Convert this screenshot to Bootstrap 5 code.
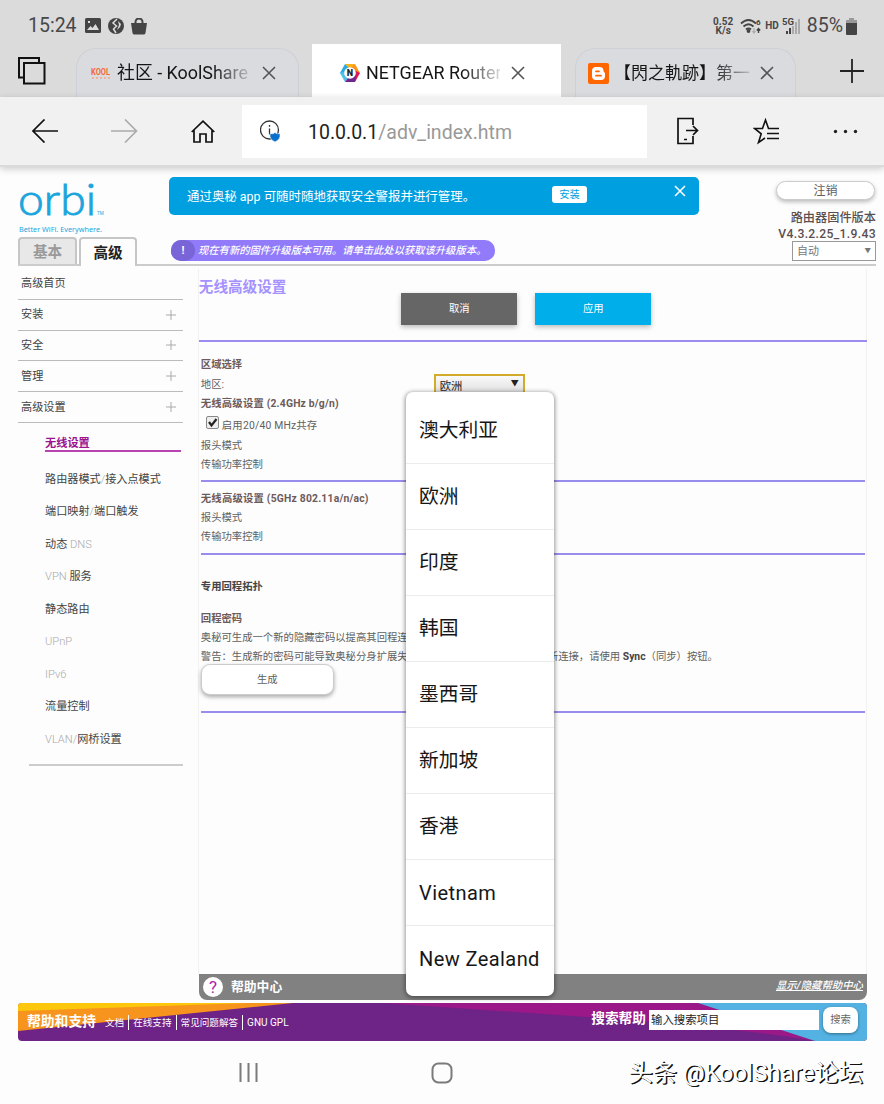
<!DOCTYPE html>
<html lang="zh-CN">
<head>
<meta charset="utf-8">
<meta name="viewport" content="width=device-width, initial-scale=1">
<title>NETGEAR Router</title>
<link rel="stylesheet" href="https://cdn.jsdelivr.net/npm/bootstrap@5.3.0/dist/css/bootstrap.min.css">
<style>
body{font-family:Roboto,"Noto Sans CJK SC",sans-serif;font-size:10.35px;line-height:1;color:#606060;background:#fdfdfd;width:884px;height:1104px;overflow:hidden;white-space:nowrap}
svg{display:block;flex:none}
.status{height:48px;background:#dbdbdb;padding:4px 27px 0 28px;color:#484848}
.clock{font-size:19.5px}
.tabs{height:49px;background:#dbdbdb}
.btab{height:49px;font-size:17.9px;color:#151515;position:relative}
.btab.idle{background:#dadbdf;border:1px solid #cdd0d6;border-bottom:0;border-radius:20px 20px 0 0;height:49px}
.btab.live{background:#fff;height:53px;margin-top:-4px;padding-top:4px}
.tname{overflow:hidden;-webkit-mask-image:linear-gradient(90deg,#000 72%,transparent 105%);mask-image:linear-gradient(90deg,#000 72%,transparent 105%);line-height:28px}
.tools{height:70px;background:#f1f1f1;border-bottom:2px solid #dadada;box-shadow:0 2px 7px #0003;position:relative}
.addr{width:405px;height:53px;background:#fff;font-size:19.5px;color:#999;margin-left:27px}
.addr b{font-weight:400;color:#222}
.page{padding:0 17px 0 18px}
.phead{height:99px;border-bottom:2px solid #ccc;margin-right:-9px}
.hleft{width:151px}
.ptab{height:27px;border:2px solid #c6c6c6;border-bottom:0;border-radius:4px 4px 0 0;font-size:14.6px;font-weight:700;padding-top:1px}
.ptab.one{width:59px;background:#e8e8e8;color:#999}
.ptab.two{width:58px;background:#fdfdfd;color:#222;margin-left:2px;height:29px;margin-bottom:-2px}
.appbar{width:530px;height:38px;background:#009fe0;border-radius:5px;color:#fff;font-size:12.45px;margin-top:10px}
.appbar .go{background:#fff;color:#009fe0;border-radius:3px;width:35px;height:17px;font-size:10.3px;padding-top:1px}
.fw{width:324px;height:21px;background:#917bfa;border-radius:10px;color:#fff;font-size:10.3px;font-weight:500;font-style:italic;margin:25px 0 0 2px}
.fw span{padding-top:2px}
.fw i{width:24px;height:21px;background:#7964d8;border-radius:10px;font-style:normal;font-weight:700;font-size:11px;margin-right:3px}
.out{width:99px;height:19px;border-radius:10px;border:1px solid #ccc;background:#fff;box-shadow:0 2px 4px #0004;font-size:12px;margin:14px 1px 0 0;padding-top:1px}
.ver{font-size:12.2px;line-height:15.5px;font-weight:500;color:#5b4f4f}
.auto{width:84px;height:20px;border:1px solid #999;font-size:11px;color:#777;background:#fff;padding:1px 4px 0}
.side{width:165px;padding-top:3px;color:#444;font-size:11.15px}
.side .top{height:30.8px;border-bottom:1px solid #bbb;padding:0 6px 0 3px}
.side .sub{height:32.5px;margin-left:27px}
.side .sub span{color:#aaa;font-weight:300}
.cur{height:20px;margin:9px 2px 11px 27px;border-bottom:2px solid #b844b0;color:#9c128f;font-weight:700;font-size:11.2px;padding-top:6px}
.main-pane{width:670px;margin-left:15px;border-left:1px solid #f2f2f2;border-right:1px solid #f2f2f2;margin-top:3px}
.ttl{height:73px;border-bottom:2px solid #9a8cf0;margin-right:-1px}
.ttl h1{font-size:14.6px;font-weight:700;color:#a592ff;width:202.5px;margin:10px 0 0}
.cmd{width:116px;height:32px;color:#fff;font-size:10.3px;margin:23.500px 18px 0 0;box-shadow:0 2px 5px #0004;padding-top:2px}
.form-rows{padding:14px 1px 0 2px}
.ln{height:19.15px}
.hd{font-weight:700;color:#6d5a5a}
.rule{height:2px;background:#988cec}
.gen{width:133px;height:31px;border:1px solid #ccc;border-radius:9px;background:#fff;box-shadow:0 2px 4px #0005;margin-top:-1.5px;padding-top:1px}
.sel{width:91px;height:22px;margin-top:1px;border:2px solid #d2ab2a;background:linear-gradient(#fafafa,#ddd);color:#222;font-size:11.3px;padding:3px 4px 0 4px}
.help{height:26px;background:#818181;color:#fff;border-radius:0 0 8px 8px;margin:0 0 0 181px;width:668px;padding:0 4px 0 3px}
.foot{width:849px;height:38px;margin-top:3px;border-radius:4px;overflow:hidden;position:relative;color:#fff}
.foot .bg-art{position:absolute;inset:0}
.foot .fg{position:relative;height:38px}
.links span+span{border-left:1px solid #fff;padding-left:4px;margin-left:4px}
.popup{position:absolute;left:406px;top:392px;width:148px;height:604px;background:#fff;border-radius:7px;box-shadow:0 1px 4px 1px #0006;padding:6px 0 0;font-size:19.8px;color:#161616}
.popup div{height:66px;border-bottom:1px solid #ececec;padding:1px 0 0 13px}
.popup div:last-child{border:0}
.popup .lat{font-size:20px;letter-spacing:.42px;padding-top:0}
.popup .lat:last-child{height:65px}
.andr{height:63px;position:relative}
.wm{font-size:24.2px;color:#fff;text-shadow:1px 1px 0 #111,1.500px 1px 0 #222}
</style>
</head>
<body>
<div class="status d-flex align-items-center">
  <span class="clock">15:24</span>
  <svg class="ms-2" width="16" height="16" viewBox="0 0 16 16"><rect width="16" height="15" rx="1.5" fill="#444"/><path d="M2 12 5.500 8l2 2 3-4 3.500 6zM3 3h2v2H3z" fill="#dbdbdb"/></svg>
  <svg style="margin-left:7px" width="16" height="16" viewBox="0 0 16 16"><circle cx="8" cy="8" r="8" fill="#444"/><path d="M9 1 5 5l3.500 3-3 3 2.500 4" fill="none" stroke="#dbdbdb" stroke-width="1.500"/><path d="m10 3 1 4-2 5 3-3 1-3z" fill="#dbdbdb"/></svg>
  <svg style="margin-left:7px" width="16" height="17" viewBox="0 0 16 17"><path d="M0 5h16l-1.500 10a2 2 0 0 1-2 1.500h-9a2 2 0 0 1-2-1.500z" fill="#444"/><path d="M4.500 7V4a3.500 3.500 0 0 1 7 0v3" fill="none" stroke="#444" stroke-width="2"/></svg>
  <div class="ms-auto d-flex align-items-center">
    <div class="text-center fw-bold" style="font-size:10px;line-height:9.5px">0.52<br>K/s</div>
    <svg style="margin-left:7px" width="22" height="17" viewBox="0 0 22 17" fill="none" stroke="#444" stroke-width="1.800"><path d="M1 5.500Q8.500-1.500 16 5.500M3.500 8.500q5-4.500 10 0M6 11.500q2.500-2.200 5 0"/><circle cx="8.500" cy="13" r="1" fill="#444"/><path d="M14 10v4M12.500 13l1.500 2 1.500-2" stroke="#aaa" stroke-width="1.200"/><path d="M18.500 15v-4M16.800 12.500l1.700-2 1.700 2" stroke-width="1.400"/><text x="16" y="7" font-size="8" font-weight="700" fill="#444" stroke="none">6</text></svg>
    <span class="fw-bold" style="font-size:10px;margin-left:3px">HD</span>
    <svg style="margin-left:3px" width="19" height="18" viewBox="0 0 19 18"><text x="0" y="8" font-size="9.500" font-weight="700" fill="#444">5G</text><path d="M5 17v-3M8 17v-6" stroke="#444" stroke-width="2"/><path d="M11 17V9M14 17V5M17 17V2" stroke="#aaa" stroke-width="2"/></svg>
    <span class="clock" style="margin-left:6px">85%</span>
    <svg style="margin-left:3px" width="11" height="17" viewBox="0 0 11 17"><path d="M3 0h5v3H3z" fill="#999"/><rect y="2" width="11" height="15" rx="1" fill="#444"/><path d="M0 2h11v3H0z" fill="#999"/></svg>
  </div>
</div>

<div class="tabs d-flex">
  <svg style="margin:9px 30px 0 18px" width="28" height="28" viewBox="0 0 28 28" fill="none" stroke="#111" stroke-width="2"><path d="M5 20.500H1V1h20v4"/><rect x="6" y="6" width="20.500" height="20.500"/></svg>
  <div class="btab idle d-flex align-items-center" style="width:223px;padding-left:14px">
    <svg width="20" height="13" viewBox="0 0 20 13"><text x="0" y="8" font-size="8.500" font-weight="700" textLength="19" lengthAdjust="spacingAndGlyphs" fill="#f36a35">KOOL</text><path d="M1 11h18" stroke="#f6a183" stroke-width="1.500" stroke-dasharray="2 2"/></svg>
    <span class="tname" style="width:132px;margin-left:6px">社区 - KoolShare</span>
    <svg style="margin-left:13px" width="14" height="14" viewBox="0 0 14 14" stroke="#555" stroke-width="1.600"><path d="m1 1 12 12M13 1 1 13"/></svg>
  </div>
  <div class="btab live d-flex align-items-center" style="width:249px;margin-left:13px;padding-left:28px">
    <svg width="20" height="20" viewBox="0 0 20 20"><path d="M5 1h10L10 7z" fill="#fbb216"/><path d="M5 1 0 10l6 3 4-7z" fill="#29aae1"/><path d="m0 10 5 9 5-6-3-5z" fill="#54c0e8"/><path d="m15 1 5 9-6 4-5-8z" fill="#f7931e"/><path d="m20 10-5 9-5-6 4-6z" fill="#d8195a"/><path d="M15 19H5l6-8 5 2z" fill="#70268c"/><circle cx="10" cy="10" r="5.800" fill="#fff"/><text x="6.800" y="13.200" font-size="9" font-weight="900" fill="#222">N</text></svg>
    <span class="tname" style="width:134px;margin-left:6px">NETGEAR Router</span>
    <svg style="margin-left:11px" width="14" height="14" viewBox="0 0 14 14" stroke="#555" stroke-width="1.600"><path d="m1 1 12 12M13 1 1 13"/></svg>
  </div>
  <div class="btab idle d-flex align-items-center" style="width:221px;margin-left:14px;padding-left:12px">
    <svg width="21" height="21" viewBox="0 0 21 21"><rect width="21" height="21" rx="2" fill="#f60"/><path d="M8 4h3.500a4 4 0 0 1 4 4c0 1.500 1.500 1 1.500 2.500V13a4 4 0 0 1-4 4H8a4 4 0 0 1-4-4V8a4 4 0 0 1 4-4z" fill="#fff"/><path d="M8 8.300h3M8 12.700h5" stroke="#f60" stroke-width="1.800" stroke-linecap="round"/></svg>
    <span class="tname" style="width:136px;margin-left:5px;font-size:17px;font-family:Roboto,'Noto Sans CJK TC',sans-serif">【閃之軌跡】第一</span>
    <svg style="margin-left:10px" width="14" height="14" viewBox="0 0 14 14" stroke="#555" stroke-width="1.600"><path d="m1 1 12 12M13 1 1 13"/></svg>
  </div>
  <svg style="margin:11px 0 0 44px" width="24" height="24" viewBox="0 0 24 24" stroke="#222" stroke-width="1.800"><path d="M12 0v24M0 12h24"/></svg>
</div>

<div class="tools d-flex align-items-center">
  <svg style="margin-left:32px" width="27" height="24" viewBox="0 0 27 24" fill="none" stroke="#111" stroke-width="1.700"><path d="M26 12H1M12.500.500 1 12l11.500 11.500"/></svg>
  <svg style="margin-left:52px" width="27" height="24" viewBox="0 0 27 24" fill="none" stroke="#aaa" stroke-width="1.600"><path d="M0 12h25M14 .500 25.500 12 14 23.500"/></svg>
  <svg style="margin-left:53px" width="24" height="23" viewBox="0 0 24 23" fill="none" stroke="#111" stroke-width="1.700"><path d="M.700 12 12 1.200 23.300 12M3 10v12h6v-8h6v8h6V10"/></svg>
  <div class="addr d-flex align-items-center">
    <svg style="margin:0 27px 0 18px" width="21" height="22" viewBox="0 0 21 22"><circle cx="9.500" cy="10" r="9" fill="none" stroke="#333" stroke-width="1.300"/><path d="M9.500 8.500v6M9.500 5v1.700" stroke="#333" stroke-width="1.300"/><path d="M10 13.500q3 1 5-1 2 2 5 1v3q0 3-5 5.500-5-2.500-5-5.500z" fill="#0b6fcc" stroke="#fff" stroke-width=".600"/></svg>
    <span style="padding-top:3px"><b>10.0.0.1</b>/adv_index.htm</span>
  </div>
  <svg style="margin-left:29px" width="23" height="28" viewBox="0 0 23 28" fill="none" stroke="#111" stroke-width="1.700"><path d="M17 8V1.500H2v25h15V19M10 13.500h11M17 9l4.500 4.500L17 18M8 22.500h3"/></svg>
  <svg style="margin-left:54px" width="27" height="27" viewBox="0 0 27 27" fill="none" stroke="#111" stroke-width="1.600"><path d="M26 10.500H15.500L12.500 2 9.500 10.500H1.500L8.200 15.800 5.500 24.500 12 20M14 15.500h12M14 20.500h12"/></svg>
  <svg style="margin-left:53px" width="25" height="5" viewBox="0 0 25 5" fill="#222"><circle cx="2.500" cy="2.500" r="1.700"/><circle cx="12.500" cy="2.500" r="1.700"/><circle cx="22.500" cy="2.500" r="1.700"/></svg>
</div>

<div class="page">
  <header class="phead d-flex">
    <div class="hleft d-flex flex-column">
      <svg width="100" height="70" viewBox="0 0 100 70" fill="#1ba5dd"><text x="0" y="48" style="font-family:Lato,sans-serif;font-weight:300" stroke="#1ba5dd" stroke-width=".9" font-size="43" textLength="78" lengthAdjust="spacingAndGlyphs">orbi</text><text x="79" y="48" font-size="4.500">TM</text><text x="1" y="65" font-family="Noto Sans" font-size="7.500" textLength="83" lengthAdjust="spacingAndGlyphs">Better WiFi. Everywhere.</text></svg>
      <div class="d-flex mt-auto"><div class="ptab one d-flex align-items-center justify-content-center">基本</div><div class="ptab two d-flex align-items-center justify-content-center">高级</div></div>
    </div>
    <div>
      <div class="appbar d-flex align-items-center"><span style="width:383px;padding:3px 0 0 18px">通过奥秘 app 可随时随地获取安全警报并进行管理。</span><span class="go d-flex align-items-center justify-content-center" style="margin-top:-3px">安装</span><svg style="margin:-10px 0 0 87px" width="12" height="12" viewBox="0 0 12 12" stroke="#fff" stroke-width="1.600"><path d="m1 1 10 10M11 1 1 11"/></svg></div>
      <div class="fw d-flex align-items-center"><i class="d-flex align-items-center justify-content-center">!</i><span>现在有新的固件升级版本可用。请单击此处以获取该升级版本。</span></div>
    </div>
    <div class="ms-auto d-flex flex-column align-items-end">
      <div class="out d-flex align-items-center justify-content-center">注销</div>
      <div class="ver text-end" style="margin-top:11px">路由器固件版本<br><span style="letter-spacing:.32px">V4.3.2.25_1.9.43</span></div>
      <div class="auto d-flex align-items-center justify-content-between" style="margin-top:-1px">自动<span style="font-size:6.5px">▼</span></div>
    </div>
  </header>

  <div class="d-flex" style="height:708px">
    <nav class="side">
      <div class="top d-flex align-items-center">高级首页</div>
      <div class="top d-flex align-items-center justify-content-between">安装<svg width="12" height="12" stroke="#aaa"><path d="M6 1v10M1 6h10"/></svg></div>
      <div class="top d-flex align-items-center justify-content-between">安全<svg width="12" height="12" stroke="#aaa"><path d="M6 1v10M1 6h10"/></svg></div>
      <div class="top d-flex align-items-center justify-content-between">管理<svg width="12" height="12" stroke="#aaa"><path d="M6 1v10M1 6h10"/></svg></div>
      <div class="top d-flex align-items-center justify-content-between">高级设置<svg width="12" height="12" stroke="#aaa"><path d="M6 1v10M1 6h10"/></svg></div>
      <div class="cur d-flex align-items-center">无线设置</div>
      <div class="sub d-flex align-items-center">路由器模式<span>/</span>接入点模式</div>
      <div class="sub d-flex align-items-center">端口映射<span>/</span>端口触发</div>
      <div class="sub d-flex align-items-center">动态&nbsp;<span>DNS</span></div>
      <div class="sub d-flex align-items-center"><span>VPN</span>&nbsp;服务</div>
      <div class="sub d-flex align-items-center">静态路由</div>
      <div class="sub d-flex align-items-center"><span>UPnP</span></div>
      <div class="sub d-flex align-items-center"><span>IPv6</span></div>
      <div class="sub d-flex align-items-center">流量控制</div>
      <div class="sub d-flex align-items-center"><span>VLAN/</span>网桥设置</div>
      <div style="height:11px;margin-left:11px;border-bottom:2px solid #ccc"></div>
    </nav>
    <main class="main-pane" style="height:705px">
      <div class="ttl d-flex align-items-start">
        <h1>无线高级设置</h1>
        <div class="cmd d-flex align-items-center justify-content-center" style="background:#666">取消</div>
        <div class="cmd d-flex align-items-center justify-content-center" style="background:#00aeea">应用</div>
      </div>
      <div class="form-rows">
        <div class="ln hd d-flex align-items-center">区域选择</div>
        <div class="ln d-flex align-items-center"><span style="width:233px">地区:</span><span class="sel d-flex justify-content-between align-items-center">欧洲<span style="font-size:8px;margin-top:-6px">▼</span></span></div>
        <div class="ln hd d-flex align-items-center" style="letter-spacing:.18px">无线高级设置 (2.4GHz b/g/n)</div>
        <div class="ln d-flex align-items-center" style="height:23px;padding:3px 0 0 5px"><svg style="margin:-7px 3px 0 0" width="13" height="13" viewBox="0 0 13 13"><rect x=".5" y=".5" width="12" height="12" rx="1.500" fill="#eee" stroke="#888"/><path d="m3 6 2.500 3.500L10.500 3" fill="none" stroke="#222" stroke-width="2.200"/></svg><span style="letter-spacing:.2px">启用20/40 MHz共存</span></div>
        <div class="ln d-flex align-items-center">报头模式</div>
        <div class="ln d-flex align-items-center">传输功率控制</div>
        <div class="rule" style="margin:5.5px 0 7px"></div>
        <div class="ln hd d-flex align-items-center" style="letter-spacing:.2px">无线高级设置 (5GHz 802.11a/n/ac)</div>
        <div class="ln d-flex align-items-center">报头模式</div>
        <div class="ln d-flex align-items-center">传输功率控制</div>
        <div class="rule" style="margin:6px 0 22.5px"></div>
        <div class="ln hd d-flex align-items-center" style="color:#444">专用回程拓扑</div>
        <div class="ln hd d-flex align-items-center" style="margin-top:13.8px">回程密码</div>
        <div class="ln d-flex align-items-center" style="height:18.4px">奥秘可生成一个新的隐藏密码以提高其回程连</div>
        <div class="ln d-flex align-items-center" style="height:18.4px"><span style="width:347px">警告：生成新的密码可能导致奥秘分身扩展失</span><span>新连接，请使用 <b style="color:#444">Sync</b>（同步）按钮。</span></div>
        <div class="gen d-flex align-items-center justify-content-center">生成</div>
        <div class="rule" style="margin-top:16px"></div>
      </div>
    </main>
  </div>
  <div class="help d-flex align-items-center"><svg width="22" height="22" viewBox="0 0 22 22"><circle cx="11" cy="11" r="10" fill="#fff"/><text x="11" y="17" text-anchor="middle" font-size="17" fill="#b01fa8">?</text></svg><span class="fw-bold" style="font-size:12.8px;margin-left:7px">帮助中心</span><span class="ms-auto fst-italic text-decoration-underline" style="font-size:10.4px;font-weight:500;margin-top:-2px">显示/隐藏帮助中心</span></div>
  <footer class="foot">
    <svg class="bg-art" width="849" height="38" viewBox="0 0 849 38"><path fill="#6e2386" d="M0 0h849v38H0z"/><path fill="#f7941e" d="M0 0h275L0 28z"/><path fill="#fdc70c" d="M0 0h230L0 8z"/><path fill="#9b1889" d="M365 0h320l112 38Q700 22 540 12z"/><path fill="#53b2e2" d="M680 0h169v38H797z"/></svg>
    <div class="fg d-flex align-items-center"><b style="font-size:13.8px;margin-left:9px">帮助和支持</b>
      <div class="links d-flex align-items-center" style="font-size:9.6px;margin:1px 0 0 9px;line-height:15px"><span>文档</span><span>在线支持</span><span>常见问题解答</span><span style="font-size:10px">GNU GPL</span></div>
      <b class="ms-auto" style="font-size:13.7px;margin-top:-6px">搜索帮助</b>
      <span class="bg-white d-flex align-items-center" style="width:170px;height:20px;color:#222;font-size:11.4px;margin:-5px 4px 0 3px;padding:2px 0 0 2px">输入搜索项目</span>
      <span class="bg-white d-flex align-items-center justify-content-center" style="width:35px;height:26px;border-radius:8px;color:#666;margin:-4px 9px 0 0;box-shadow:0 1px 3px #0006">搜索</span>
    </div>
  </footer>
</div>

<div class="andr d-flex align-items-center">
  <svg style="margin-left:239px" width="20" height="19" stroke="#7b7b7b" stroke-width="2"><path d="M1.500 0v19M9.500 0v19M17.500 0v19"/></svg>
  <svg style="margin-left:172px" width="22" height="22"><rect x="1.500" y="1.500" width="19" height="19" rx="6" fill="none" stroke="#7b7b7b" stroke-width="2"/></svg>
  <span class="wm ms-auto" style="margin-right:21px;padding-top:2px">头条 @KoolShare论坛</span>
</div>

<div class="popup">
  <div class="d-flex align-items-center">澳大利亚</div><div class="d-flex align-items-center">欧洲</div><div class="d-flex align-items-center">印度</div><div class="d-flex align-items-center">韩国</div><div class="d-flex align-items-center">墨西哥</div><div class="d-flex align-items-center">新加坡</div><div class="d-flex align-items-center">香港</div><div class="lat d-flex align-items-center">Vietnam</div><div class="lat d-flex align-items-center">New Zealand</div>
</div>
<script src="https://cdn.jsdelivr.net/npm/bootstrap@5.3.0/dist/js/bootstrap.bundle.min.js"></script>
</body>
</html>
